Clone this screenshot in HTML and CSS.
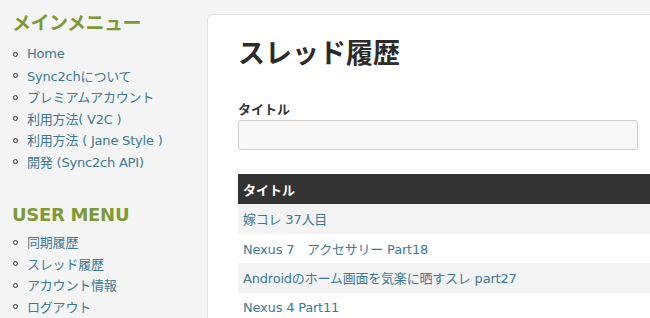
FILE: index.html
```html
<!DOCTYPE html>
<html lang="ja">
<head>
<meta charset="utf-8">
<title>スレッド履歴</title>
<link rel="stylesheet" href="styles.css">
</head>
<body>
<div class="page">
  <aside class="sidebar">
    <h2 class="side-title">メインメニュー</h2>
    <ul class="menu">
      <li><a href="#">Home</a></li>
      <li><a href="#">Sync2chについて</a></li>
      <li><a href="#">プレミアムアカウント</a></li>
      <li><a href="#">利用方法( V2C )</a></li>
      <li><a href="#">利用方法 ( Jane Style )</a></li>
      <li><a href="#">開発 (Sync2ch API)</a></li>
    </ul>
    <h2 class="side-title user">USER MENU</h2>
    <ul class="menu">
      <li><a href="#">同期履歴</a></li>
      <li><a href="#">スレッド履歴</a></li>
      <li><a href="#">アカウント情報</a></li>
      <li><a href="#">ログアウト</a></li>
    </ul>
  </aside>
  <main class="panel">
    <h1 class="title">スレッド履歴</h1>
    <label class="label" for="q">タイトル</label>
    <input class="input" id="q" type="text">
    <table class="threads">
      <thead><tr><th>タイトル</th></tr></thead>
      <tbody>
        <tr><td><a href="#">嫁コレ 37人目</a></td></tr>
        <tr><td><a href="#">Nexus 7　アクセサリー Part18</a></td></tr>
        <tr><td><a href="#">Androidのホーム画面を気楽に晒すスレ part27</a></td></tr>
        <tr><td><a href="#">Nexus 4 Part11</a></td></tr>
      </tbody>
    </table>
  </main>
</div>
</body>
</html>
```
FILE: styles.css
```css
html, body {
  margin: 0;
  padding: 0;
  height: 100%;
  overflow: hidden;
}
body {
  background: #f4f4f4;
  font-family: "DejaVu Sans", Verdana, "Noto Sans CJK JP", sans-serif;
  font-size: 13px;
  color: #333;
}
.page {
  display: flex;
  align-items: stretch;
  height: 100%;
}
.sidebar {
  width: 195px;
  flex: none;
  padding-left: 12px;
}
.side-title {
  margin: 11px 0 8px;
  font-size: 19px;
  line-height: 24px;
  font-weight: bold;
  color: #7d9a35;
  font-family: "DejaVu Sans", "Noto Sans CJK JP", sans-serif;
  letter-spacing: -0.5px;
}
.side-title.user {
  margin: 31px 0 4px;
  font-size: 18px;
  letter-spacing: -0.3px;
}
.menu {
  list-style: none;
  margin: 0;
  padding: 0;
}
.menu li {
  display: flex;
  align-items: center;
  height: 21.5px;
  font-size: 13px;
  letter-spacing: -0.2px;
}
.menu li::before {
  content: "";
  width: 3px;
  height: 3px;
  border: 1.5px solid #333;
  border-radius: 50%;
  margin: 1px 9px 0 1px;
  flex: none;
}
a {
  color: #3a7a96;
  text-decoration: none;
}
.panel {
  flex: 1;
  min-width: 0;
  margin-top: 14px;
  background: #fff;
  border: 1px solid #e2e2e2;
  border-right: none;
  border-bottom: none;
  border-radius: 6px 0 0 0;
  padding: 21px 0 0 30px;
}
.title {
  margin: 0;
  font-size: 27px;
  line-height: 32px;
  font-weight: bold;
  color: #2b2b2b;
  font-family: "Noto Sans CJK JP", sans-serif;
}
.label {
  display: block;
  margin-top: 33px;
  font-size: 13px;
  line-height: 16px;
  font-weight: bold;
  color: #333;
  font-family: "Noto Sans CJK JP", sans-serif;
}
.input {
  display: block;
  box-sizing: border-box;
  width: 400px;
  height: 30px;
  margin: 3px 0 0;
  background: #f8f8f8;
  border: 1px solid #cfcfcf;
  border-radius: 3px;
}
.threads {
  margin-top: 24px;
  width: 100%;
  border-collapse: collapse;
}
.threads th {
  background: #333;
  color: #fff;
  text-align: left;
  font-weight: bold;
  font-size: 13px;
  height: 30px;
  padding: 0 0 0 5px;
  font-family: "Noto Sans CJK JP", sans-serif;
}
.threads td {
  height: 29.5px;
  padding: 0 0 0 5px;
  font-size: 13px;
  letter-spacing: -0.2px;
}
.threads tbody tr:nth-child(odd) td {
  background: #f3f3f3;
}
```
